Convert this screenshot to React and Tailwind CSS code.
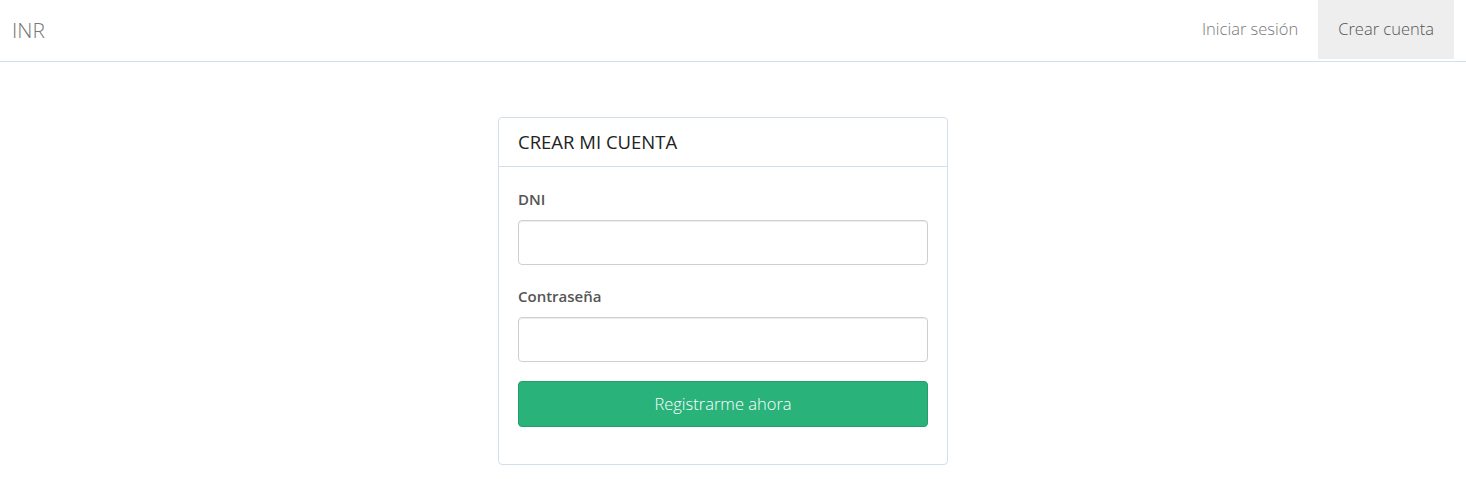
export default function App() {
  return (
    <div className="min-h-screen bg-white font-['Open_Sans',sans-serif] text-[#636b6f]">
      <nav className="flex h-[62px] items-stretch justify-between border-b border-[#d3e0e9] bg-white pr-3">
        <a className="flex items-center pl-3 text-[21px] font-light text-[#777]">INR</a>
        <div className="flex h-[59px]">
          <a className="flex items-center px-5 text-[16.5px] font-light text-[#777]">Iniciar sesión</a>
          <a className="flex items-center bg-[#eeeeee] px-5 text-[16.5px] font-light text-[#555]">Crear cuenta</a>
        </div>
      </nav>

      <div className="pt-[55px] pl-[498px]">
        <div className="w-[450px] rounded-[4px] border border-[#d3e0e9] bg-white">
          <div className="flex h-[49px] items-center border-b border-[#d3e0e9] px-[19px] text-[18.5px] text-[#222]">
            CREAR MI CUENTA
          </div>
          <form className="px-[19px] pt-[21px] pb-[37px]">
            <label className="block text-[15px] leading-[23px] font-semibold text-[#555]">DNI</label>
            <input className="mt-[9px] block h-[45px] w-full rounded-[4px] border border-[#ccd0d2] shadow-[inset_0_1px_1px_rgba(0,0,0,0.075)]" />
            <label className="mt-[20px] block text-[15px] leading-[23px] font-semibold text-[#555]">Contraseña</label>
            <input type="password" className="mt-[9px] block h-[45px] w-full rounded-[4px] border border-[#ccd0d2] shadow-[inset_0_1px_1px_rgba(0,0,0,0.075)]" />
            <button type="button" className="mt-[19px] block h-[46px] w-full rounded-[4px] border border-[#259d6d] bg-[#2ab27b] text-[16.5px] font-light text-white">
              Registrarme ahora
            </button>
          </form>
        </div>
      </div>
    </div>
  )
}
